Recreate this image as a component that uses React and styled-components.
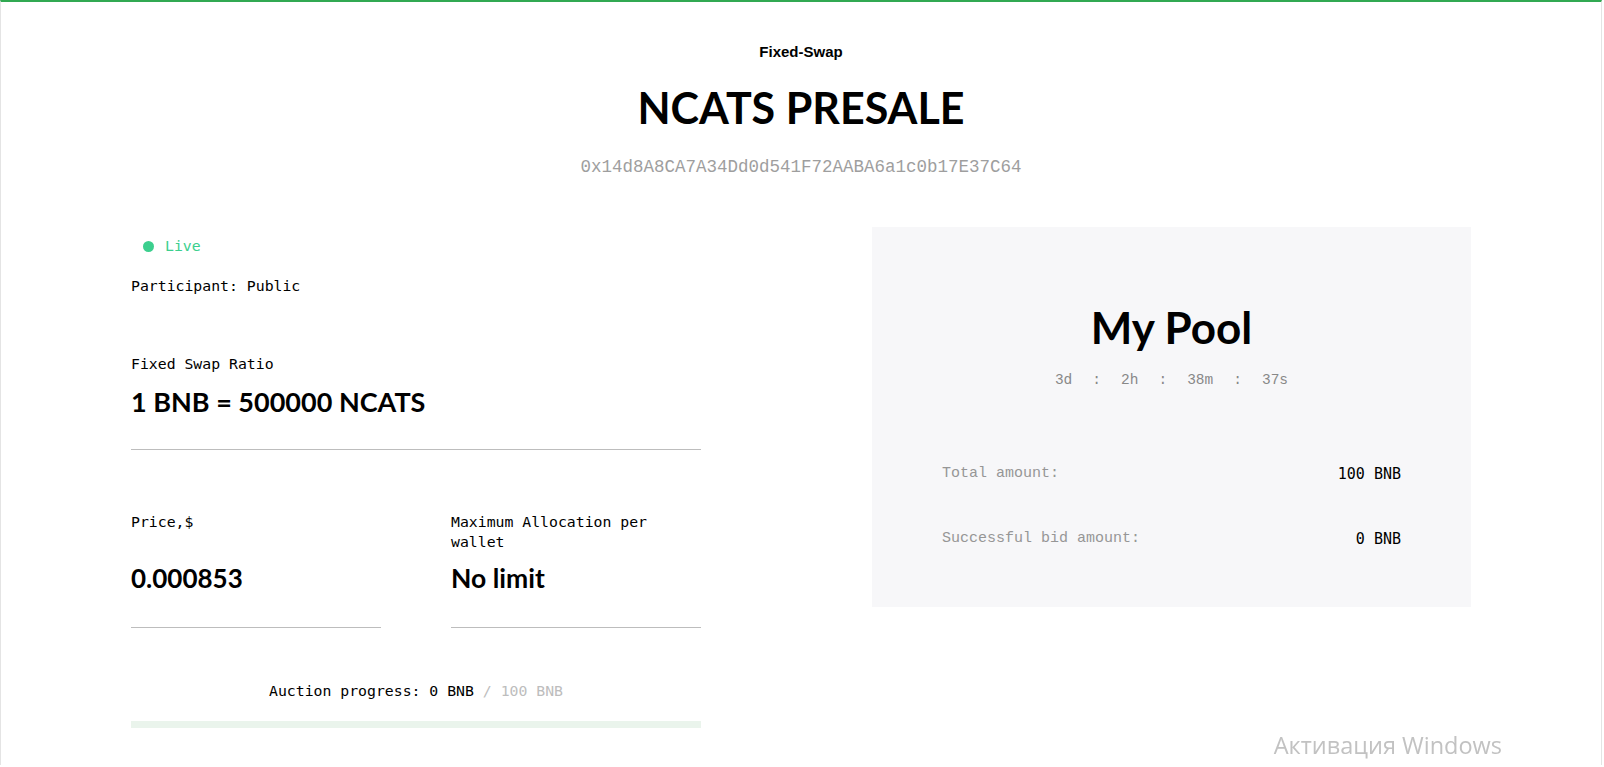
import React from 'react';
import styled, { createGlobalStyle } from 'styled-components'

const Global = createGlobalStyle`
body {
  margin: 0;
  background: #fff;
}
`

const mono = `"DejaVu Sans Mono", "Liberation Mono", monospace`
const thinMono = `"Liberation Mono", "DejaVu Sans Mono", monospace`
const display = `Lato, "Noto Sans", sans-serif`

const Page = styled.div`
min-height: 765px;
border-top: 2px solid #31a952;
border-left: 1px solid #e4e4e4;
border-right: 1px solid #e4e4e4;
margin-right: 2px;
box-sizing: border-box;
`
const Header = styled.header`
display: flex;
flex-direction: column;
align-items: center;
`
const Kind = styled.div`
margin-top: 41px;
font-family: "Liberation Sans", Arial, sans-serif;
font-weight: 700;
font-size: 15px;
line-height: 18px;
color: #000;
`
const Title = styled.h1`
margin: 22px 0 0;
font-family: ${display};
font-weight: 700;
font-size: 43px;
line-height: 50px;
color: #000;
`
const Address = styled.div`
margin-top: 23px;
font-family: ${thinMono};
font-size: 17.5px;
line-height: 22px;
color: #9e9e9e;
`
const Main = styled.main`
display: flex;
justify-content: space-between;
align-items: flex-start;
width: 1340px;
margin: 49px auto 0;
`
const Left = styled.section`
width: 570px;
display: flex;
flex-direction: column;
`
const Status = styled.div`
margin-top: 9px;
padding-left: 12px;
display: flex;
align-items: center;
gap: 11px;
font-family: ${mono};
font-size: 14.8px;
line-height: 20px;
color: #3ccf8e;
`
const Dot = styled.span`
width: 11px;
height: 11px;
border-radius: 50%;
background: #3ccf8e;
`
const Text = styled.div`
margin-top: ${p => p.$top || 0}px;
font-family: ${mono};
font-size: 14.8px;
line-height: 20px;
color: #000;
min-height: ${p => p.$lines ? p.$lines * 20 : 20}px;
`
const Value = styled.div`
margin-top: ${p => p.$top || 0}px;
font-family: ${display};
font-weight: 700;
font-size: ${p => p.$size || 26}px;
line-height: 32px;
color: #000;
`
const Rule = styled.hr`
margin: ${p => p.$top || 0}px 0 0;
border: none;
border-top: 1px solid #bdbdbd;
`
const Pair = styled.div`
display: grid;
grid-template-columns: 1fr 1fr;
column-gap: 70px;
`
const Cell = styled.div`
display: flex;
flex-direction: column;
`
const Progress = styled.div`
margin-top: 53px;
text-align: center;
font-family: ${mono};
font-size: 14.8px;
line-height: 20px;
color: #000;
`
const Muted = styled.span`
color: #bdbdbd;
`
const Bar = styled.div`
margin-top: 20px;
height: 7px;
background: #eaf4ec;
`
const Pool = styled.section`
width: 599px;
background: #f7f7f9;
padding: 75px 70px 58px;
box-sizing: border-box;
display: flex;
flex-direction: column;
`
const PoolTitle = styled.h2`
margin: 0;
text-align: center;
font-family: ${display};
font-weight: 700;
font-size: 44px;
line-height: 50px;
color: #000;
`
const Timer = styled.div`
margin-top: 18px;
display: flex;
justify-content: center;
gap: 20px;
font-family: ${thinMono};
font-size: 14.5px;
line-height: 20px;
color: #888;
`
const Row = styled.div`
margin-top: ${p => p.$top}px;
display: flex;
justify-content: space-between;
font-size: 15px;
line-height: 20px;
`
const Label = styled.span`
font-family: ${thinMono};
color: #969696;
`
const Amount = styled.span`
font-family: ${mono};
color: #000;
`
const Watermark = styled.div`
position: fixed;
right: 102px;
bottom: 6px;
font-family: "Open Sans", "Noto Sans", sans-serif;
font-size: 23.5px;
color: #c2c2c2;
pointer-events: none;
`

const timer = ['3d', ':', '2h', ':', '38m', ':', '37s']

const App = () => {
	return (
		<Page>
			<Global />
			<Header>
				<Kind>Fixed-Swap</Kind>
				<Title>NCATS PRESALE</Title>
				<Address>0x14d8A8CA7A34Dd0d541F72AABA6a1c0b17E37C64</Address>
			</Header>
			<Main>
				<Left>
					<Status><Dot />Live</Status>
					<Text $top={20}>Participant: Public</Text>
					<Text $top={58}>Fixed Swap Ratio</Text>
					<Value $top={12} $size={27}>1 BNB = 500000 NCATS</Value>
					<Rule $top={31} />
					<Pair>
						<Cell>
							<Text $top={62} $lines={2}>Price,$</Text>
							<Value $top={10}>0.000853</Value>
							<Rule $top={33} />
						</Cell>
						<Cell>
							<Text $top={62} $lines={2}>Maximum Allocation per wallet</Text>
							<Value $top={10} $size={26.5}>No limit</Value>
							<Rule $top={33} />
						</Cell>
					</Pair>
					<Progress>Auction progress: 0 BNB <Muted>/ 100 BNB</Muted></Progress>
					<Bar />
				</Left>
				<Pool>
					<PoolTitle>My Pool</PoolTitle>
					<Timer>
						{timer.map((t, i) => <span key={i}>{t}</span>)}
					</Timer>
					<Row $top={74}>
						<Label>Total amount:</Label>
						<Amount>100 BNB</Amount>
					</Row>
					<Row $top={45}>
						<Label>Successful bid amount:</Label>
						<Amount>0 BNB</Amount>
					</Row>
				</Pool>
			</Main>
			<Watermark>Активация Windows</Watermark>
		</Page>
	);
};

export default App;
